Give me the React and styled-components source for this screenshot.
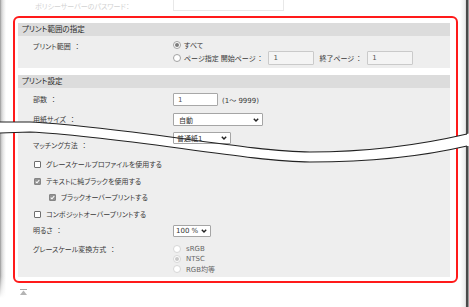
import React from 'react';
import styled, { createGlobalStyle } from 'styled-components';

const GlobalStyle = createGlobalStyle`
  html, body {
    margin: 0;
    padding: 0;
    background: #fff;
  }
  body {
    font-family: "DejaVu Sans", "Noto Sans CJK JP", sans-serif;
    font-size: 7px;
    font-feature-settings: "palt";
    color: #383838;
  }
`;

const Page = styled.div`
  position: relative;
  display: flex;
  width: 469px;
  height: 307px;
  overflow: hidden;
  background: #fff;
`;

const LeftShade = styled.div`
  flex: 0 0 6px;
  background:
    linear-gradient(to bottom, rgba(255, 255, 255, 0) 276px, #fff 298px),
    linear-gradient(to right, #8a8a8a 0, #c4c4c4 1px, #e6e6e6 3px, #fff 6px);
`;

const RightShade = styled.div`
  flex: 0 0 9px;
  background: linear-gradient(
    to right,
    #fff 0,
    #ececec 5px,
    #cfcfcf 6px,
    #4a4a4a 6px,
    #4a4a4a 8px,
    #9a9a9a 8px
  );
`;

const Main = styled.div`
  flex: 1;
  display: flex;
  flex-direction: column;
  min-width: 0;
`;

const FadedRow = styled.div`
  display: grid;
  grid-template-columns: 138px 111px;
  align-items: center;
  height: 12px;
  padding-left: 29px;
  color: #d2d2d2;
`;

const FadedInput = styled.div`
  box-sizing: border-box;
  height: 14px;
  margin-top: -4px;
  border: 1px solid #e8e8e8;
  background: #fff;
`;

const Frame = styled.div`
  display: flex;
  flex-direction: column;
  gap: 7px;
  margin: 4px 2px 0 7px;
  padding: 5px 6px 4px 3px;
  border: 2px solid #ff1a1a;
  border-radius: 6px;
`;

const SectionHead = styled.div`
  height: 13px;
  line-height: 13px;
  padding-left: 4px;
  background: #dcdcdc;
  color: #2a2a2a;
  font-size: 7.5px;
`;

const SectionBody = styled.div`
  display: flex;
  flex-direction: column;
  padding: ${p => p.$pad};
  background: #eeeeee;
`;

const Row = styled.div`
  display: grid;
  grid-template-columns: 140px 1fr;
  align-items: ${p => (p.$top ? 'start' : 'center')};
  min-height: ${p => p.$h || 12}px;
  margin-top: ${p => p.$mt || 0}px;
  padding-left: 15px;
`;

const LabelText = styled.div`
  padding-top: ${p => p.$pt || 0}px;
  line-height: ${p => p.$lh || 12}px;
  color: #3a3a3a;
  white-space: nowrap;
`;

const Colon = styled.span`
  margin-left: ${p => (p.$tight ? 1 : 3)}px;
  font-feature-settings: normal;
`;

const Controls = styled.div`
  display: flex;
  align-items: center;
  gap: ${p => p.$gap || 4}px;
  white-space: nowrap;
`;

const RadioGroup = styled.div`
  display: flex;
  flex-direction: column;
`;

const RadioLine = styled.div`
  display: flex;
  align-items: center;
  height: ${p => p.$h}px;
  color: ${p => (p.$dim ? '#666' : '#3a3a3a')};
  white-space: nowrap;
`;

const Radio = styled.span`
  box-sizing: border-box;
  display: inline-flex;
  flex: none;
  align-items: center;
  justify-content: center;
  width: 8px;
  height: 8px;
  margin-right: ${p => (p.$dim ? 5 : 3)}px;
  border: 1px solid ${p => (p.$dim ? '#d6d6d6' : '#a2a2a2')};
  border-radius: 50%;
  background: #fff;
  &::after {
    content: '';
    width: 4px;
    height: 4px;
    border-radius: 50%;
    background: ${p => (p.$on ? (p.$dim ? '#c8c8c8' : '#7c7c7c') : 'transparent')};
  }
`;

const TextBox = styled.input`
  box-sizing: border-box;
  width: ${p => p.$w}px;
  height: ${p => p.$h}px;
  margin: 0;
  padding: 0 0 0 4px;
  border: 1px solid ${p => (p.$dim ? '#cacaca' : '#a8a8a8')};
  border-radius: 1px;
  background: ${p => (p.$dim ? '#f4f4f4' : '#fff')};
  color: #555;
  font: inherit;
  outline: none;
`;

const SelectBox = styled.div`
  box-sizing: border-box;
  display: flex;
  align-items: center;
  justify-content: space-between;
  width: ${p => p.$w}px;
  height: ${p => p.$h || 12}px;
  padding: 0 3px 0 ${p => p.$pl || 4}px;
  border: 1px solid #a5a5a5;
  border-radius: 1px;
  background: #fff;
  color: #333;
  white-space: nowrap;
`;

const CheckRow = styled.div`
  display: flex;
  align-items: center;
  height: 12px;
  margin-top: ${p => p.$mt || 0}px;
  padding-left: ${p => 16 + (p.$indent || 0)}px;
  color: #3a3a3a;
  white-space: nowrap;
`;

const Box = styled.span`
  box-sizing: border-box;
  display: inline-flex;
  flex: none;
  align-items: center;
  justify-content: center;
  width: 7px;
  height: 7px;
  margin-right: 5px;
  border: 1px solid ${p => (p.$on ? '#858585' : '#6e6e6e')};
  border-radius: 1px;
  background: ${p => (p.$on ? '#939393' : '#fff')};
`;

const Break = styled.div`
  position: absolute;
  left: 0;
  top: 115px;
  width: 469px;
  height: 55px;
  pointer-events: none;
`;

const BreakLayer = styled.svg`
  position: absolute;
  left: 0;
  top: 0;
`;

const PeekSelect = styled(SelectBox)`
  position: absolute;
  left: 173px;
  top: 17px;
`;

const TopLink = styled.svg`
  margin: 6px 0 0 14px;
`;

const UPPER = 'M0 122 L30 122 C120 126 250 152 310 152 C370 152 420 145 467 134';
const LOWER = 'M0 133 L30 132 C120 136 250 162 310 162 C370 162 420 157 467 146';
const BAND =
  'M-2 122 L30 122 C120 126 250 152 310 152 C370 152 420 145 467 134 L471 133 L471 146 L467 146 ' +
  'C420 157 370 162 310 162 C250 162 120 136 30 132 L-2 133 Z';

function Chevron() {
  return (
    <svg width="6" height="4" viewBox="0 0 6 4">
      <path d="M0.8 0.7 L3 3 L5.2 0.7" fill="none" stroke="#222" strokeWidth="1.4" />
    </svg>
  );
}

function Check() {
  return (
    <svg width="5" height="5" viewBox="0 0 5 5">
      <path d="M0.7 2.6 L2 3.8 L4.3 1" fill="none" stroke="#fff" strokeWidth="1.1" />
    </svg>
  );
}

function Label({ children, pt, lh }) {
  return (
    <LabelText $pt={pt} $lh={lh}>
      {children}
      <Colon>：</Colon>
    </LabelText>
  );
}

function Select({ w, h, pl, children }) {
  return (
    <SelectBox $w={w} $h={h} $pl={pl}>
      <span>{children}</span>
      <Chevron />
    </SelectBox>
  );
}

function CheckItem({ on, indent, mt, children }) {
  return (
    <CheckRow $indent={indent} $mt={mt}>
      <Box $on={on}>{on && <Check />}</Box>
      {children}
    </CheckRow>
  );
}

export default function App() {
  return (
    <>
      <GlobalStyle />
      <Page>
        <LeftShade />
        <Main>
          <FadedRow>
            <span>ポリシーサーバーのパスワード：</span>
            <FadedInput />
          </FadedRow>

          <Frame>
            <div>
              <SectionHead>プリント範囲の指定</SectionHead>
              <SectionBody $pad="3px 0">
                <Row $top>
                  <Label pt={3} lh={11}>プリント範囲</Label>
                  <RadioGroup>
                    <RadioLine $h={12}>
                      <Radio $on />
                      すべて
                    </RadioLine>
                    <RadioLine $h={14}>
                      <Radio />
                      ページ指定
                      <Controls $gap={5} style={{ marginLeft: 2 }}>
                        <span>
                          開始ページ<Colon $tight>：</Colon>
                        </span>
                        <TextBox $w={46} $h={14} $dim readOnly value="1" />
                        <span>
                          終了ページ<Colon $tight>：</Colon>
                        </span>
                        <TextBox $w={46} $h={14} $dim readOnly value="1" />
                      </Controls>
                    </RadioLine>
                  </RadioGroup>
                </Row>
              </SectionBody>
            </div>

            <div>
              <SectionHead>プリント設定</SectionHead>
              <SectionBody $pad="5px 0 3px">
                <Row $h={13}>
                  <Label>部数</Label>
                  <Controls>
                    <TextBox $w={45} $h={13} readOnly value="1" />
                    <span>(1～ 9999)</span>
                  </Controls>
                </Row>
                <Row $h={13} $mt={7}>
                  <Label>用紙サイズ</Label>
                  <Controls>
                    <Select w={90} h={13} pl={5}>自動</Select>
                  </Controls>
                </Row>
                <Row $mt={14}>
                  <Label>マッチング方法</Label>
                  <div />
                </Row>

                <CheckItem mt={6}>グレースケールプロファイルを使用する</CheckItem>
                <CheckItem on mt={5}>テキストに純ブラックを使用する</CheckItem>
                <CheckItem on indent={15} mt={4}>ブラックオーバープリントする</CheckItem>
                <CheckItem mt={5}>コンポジットオーバープリントする</CheckItem>

                <Row $mt={5}>
                  <Label>明るさ</Label>
                  <Controls>
                    <Select w={38} h={12} pl={2}>100 %</Select>
                  </Controls>
                </Row>
                <Row $top $mt={7}>
                  <Label>グレースケール変換方式</Label>
                  <RadioGroup>
                    <RadioLine $h={10} $dim>
                      <Radio $dim />
                      sRGB
                    </RadioLine>
                    <RadioLine $h={10} $dim>
                      <Radio $dim $on />
                      NTSC
                    </RadioLine>
                    <RadioLine $h={10} $dim>
                      <Radio $dim />
                      RGB均等
                    </RadioLine>
                  </RadioGroup>
                </Row>
              </SectionBody>
            </div>
          </Frame>

          <TopLink width="7" height="6" viewBox="0 0 7 6">
            <rect x="0" y="0" width="7" height="1" fill="#a8a8a8" />
            <path d="M3.5 1.6 L7 6 L0 6 Z" fill="#b4b4b4" />
          </TopLink>
        </Main>
        <RightShade />

        <Break>
          <BreakLayer width="469" height="55" viewBox="0 115 469 55">
            <path d={BAND} fill="#fff" />
          </BreakLayer>
          <PeekSelect $w={58} $h={12} $pl={3}>
            <span>普通紙1</span>
            <Chevron />
          </PeekSelect>
          <BreakLayer width="469" height="55" viewBox="0 115 469 55">
            <path d={UPPER} fill="none" stroke="#222" strokeWidth="1.1" />
            <path d={LOWER} fill="none" stroke="#222" strokeWidth="1.1" />
          </BreakLayer>
        </Break>
      </Page>
    </>
  );
}
